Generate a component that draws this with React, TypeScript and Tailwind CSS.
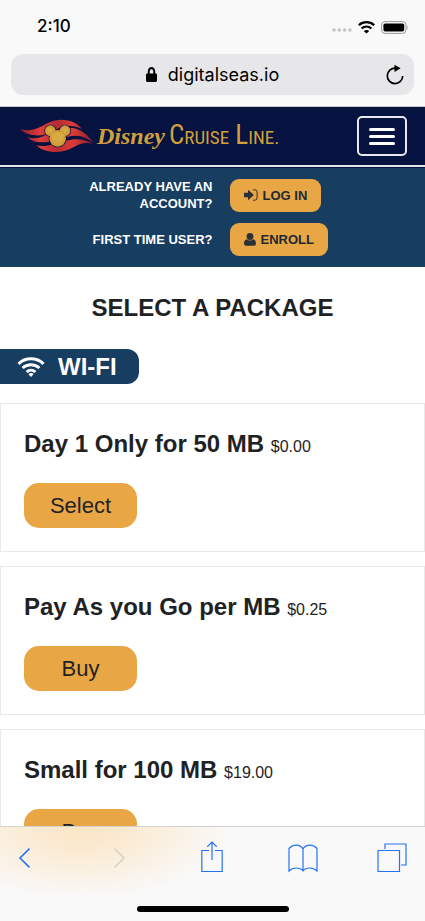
import React from "react";
import { FaLock } from "react-icons/fa";

const packages = [
  { name: "Day 1 Only for 50 MB", price: "$0.00", action: "Select" },
  { name: "Pay As you Go per MB", price: "$0.25", action: "Buy" },
  { name: "Small for 100 MB", price: "$19.00", action: "Buy" },
];

function WifiArcs({ className }: { className: string }) {
  return (
    <svg viewBox="0 0 28 20" className={className} fill="none" stroke="currentColor" strokeWidth="3" aria-hidden="true">
      <path d="M1.500 6.800C8.500 .2 19.500 .2 26.500 6.800" />
      <path d="M5.600 11c4.800-4.400 12-4.400 16.800 0" />
      <path d="M9.600 15c2.600-2.300 6.200-2.300 8.800 0" />
      <path d="M11.300 17q2.700-1.800 5.400 0L14 20z" fill="currentColor" stroke="none" />
    </svg>
  );
}

function StatusBar() {
  return (
    <div className="flex h-[54px] items-center justify-between pr-4 pl-[37px]">
      <span className="font-['Inter'] text-[17px] font-medium">2:10</span>
      <div className="flex items-center gap-[6px]">
        <svg viewBox="0 0 20 12" className="h-3 w-5" fill="#c3c3c5" aria-hidden="true">
          <circle cx="2" cy="9" r="1.800" /><circle cx="7.300" cy="9" r="1.800" />
          <circle cx="12.600" cy="9" r="1.800" /><circle cx="17.900" cy="9" r="1.800" />
        </svg>
        <svg viewBox="0 0 17 13" className="h-[13px] w-[17px]" fill="none" stroke="#000" strokeWidth="2.200" aria-hidden="true">
          <path d="M.8 4.200c4.400-4 11-4 15.400 0M3.600 7.500c2.900-2.600 6.900-2.600 9.800 0" />
          <path d="M5.800 9.900q2.700-2 5.400 0L8.500 12.500z" fill="#000" stroke="none" />
        </svg>
        <svg viewBox="0 0 28 13" className="h-[13px] w-7" aria-hidden="true">
          <rect x=".600" y=".600" width="24.400" height="11.800" rx="3.400" fill="none" stroke="#999" />
          <rect x="2.400" y="2.400" width="20.800" height="8.200" rx="1.800" />
          <path d="M26.200 4.600q1.600 1.900 0 3.800z" fill="#999" />
        </svg>
      </div>
    </div>
  );
}

function AddressBar() {
  return (
    <div className="relative mx-[11px] flex h-[41px] items-center justify-center gap-[11px] rounded-xl bg-[#e7e7e9]">
      <FaLock className="h-[15px] w-[11px]" preserveAspectRatio="none" aria-hidden="true" />
      <span className="font-['Inter'] text-[18px]">digitalseas.io</span>
      <button type="button" aria-label="Reload" className="absolute right-[9px]">
        <svg viewBox="0 0 20 22" className="h-[22px] w-5" fill="none" stroke="#000" strokeWidth="1.700" aria-hidden="true">
          <path d="M10.500 4.200A7.700 7.700 0 1 0 17.700 12" />
          <path d="M9.500.8L15.600 4.300 9.500 7.900z" fill="#000" stroke="none" />
        </svg>
      </button>
    </div>
  );
}

function MickeyFlag() {
  return (
    <svg viewBox="28 12 222 102" className="h-[34px] w-[74px] shrink-0" aria-hidden="true">
      <defs>
        <linearGradient id="flag" gradientUnits="userSpaceOnUse" x1="28" y1="0" x2="250" y2="0">
          <stop offset="0" stopColor="#8c1c2e" />
          <stop offset=".28" stopColor="#e03d3a" />
          <stop offset=".5" stopColor="#b52a34" />
          <stop offset=".72" stopColor="#dd3c38" />
          <stop offset="1" stopColor="#7d1a30" />
        </linearGradient>
        <radialGradient id="gold">
          <stop offset="0" stopColor="#ddb144" />
          <stop offset="1" stopColor="#cb9636" />
        </radialGradient>
      </defs>
      <g fill="url(#flag)">
        <path d="M28 42C84 58 102 14 150 14 182 14 202 26 214 42 186 26 152 32 124 50 92 68 50 64 28 42z" />
        <path d="M50 67C100 80 118 40 170 38 210 36 232 60 250 86 228 66 202 56 170 66 140 76 80 96 50 67z" />
        <path d="M76 91C110 98 130 86 164 78 196 68 222 72 246 86 208 78 196 96 168 106 134 116 100 112 76 91z" />
      </g>
      <g fill="#06123f">
        <circle cx="119" cy="47" r="18" />
        <circle cx="163" cy="47" r="18" />
        <circle cx="141" cy="70" r="27" />
      </g>
      <g fill="url(#gold)">
        <circle cx="119" cy="47" r="16" />
        <circle cx="163" cy="47" r="16" />
        <circle cx="141" cy="70" r="25" />
      </g>
      <path d="M122 58Q141 44 160 58L156 76H126z" fill="#d8ab41" />
    </svg>
  );
}

function Navbar() {
  return (
    <div className="border-b border-[#06123f]">
      <nav className="flex h-[60px] items-center justify-between border-b-2 border-[#dfe2ea] bg-[#06123f] pr-[18px] pl-5">
        <a href="#home" className="flex items-center text-[#d2a03a]">
          <MickeyFlag />
          <span className="ml-[3px] font-['Liberation_Serif',serif] text-[24px] leading-8 font-bold italic">Disney</span>
          <span className="ml-1 font-['Roboto_Condensed','DejaVu_Sans_Condensed',sans-serif] text-[27px] leading-8 whitespace-nowrap">
            C<span className="text-[19px]">RUISE</span> L<span className="text-[19px]">INE.</span>
          </span>
        </a>
        <button type="button" aria-label="Menu" className="flex h-10 w-[50px] flex-col items-center justify-center gap-1 rounded-[5px] border-2 border-[#e6e8ee]">
          <span className="h-[3px] w-[26px] rounded-full bg-white" />
          <span className="h-[3px] w-[26px] rounded-full bg-white" />
          <span className="h-[3px] w-[26px] rounded-full bg-white" />
        </button>
      </nav>
    </div>
  );
}

function AccountPanel() {
  const button = "flex h-[33px] items-center gap-[5px] justify-self-start rounded-[9px] bg-[#e8a645] px-[14px] text-[#1f2933]";
  return (
    <section className="grid grid-cols-2 items-center gap-x-[17px] gap-y-[11px] bg-[#173d61] pt-[10px] pb-[11px] pl-[17px] text-[13px] leading-[17px] font-bold">
      <p className="justify-self-end pl-[60px] text-right text-white">ALREADY HAVE AN ACCOUNT?</p>
      <button type="button" className={button}>
        <svg viewBox="0 0 14 12" className="h-3 w-[14px]" fill="#2b3036" aria-hidden="true">
          <path d="M0 3.800h4V.8L10 6l-6 5.200V8.200H0z" />
          <path d="M9 .8h1.800A2.300 2.300 0 0 1 13.100 3v6a2.300 2.300 0 0 1-2.300 2.200H9" fill="none" stroke="#2b3036" strokeWidth="1" />
        </svg>
        LOG IN
      </button>
      <p className="justify-self-end text-right text-white">FIRST TIME USER?</p>
      <button type="button" className={button}>
        <svg viewBox="0 0 12 13" className="h-[13px] w-3" fill="#2b3036" aria-hidden="true">
          <circle cx="6" cy="3.500" r="3.400" />
          <path d="M2.800 6.200Q6 9 9.200 6.200 12 7 12 10.500 12 12.700 10 12.700H2Q0 12.700 0 10.500 0 7 2.800 6.200z" />
        </svg>
        ENROLL
      </button>
    </section>
  );
}

function PackageCard({ name, price, action }: { name: string; price: string; action: string }) {
  return (
    <article className="h-[149px] shrink-0 border border-[#e9e9e9] px-[23px] pt-[25px]">
      <h3 className="text-2xl leading-[30px] font-bold">
        {name} <small className="text-base font-normal">{price}</small>
      </h3>
      <button type="button" className="mt-6 h-[45px] w-[113px] rounded-[15px] bg-[#e8a645] text-[22px]">
        {action}
      </button>
    </article>
  );
}

function BrowserToolbar() {
  return (
    <footer className="shrink-0 border-t border-[#d2d2d2] bg-[#f9f9f9] bg-[radial-gradient(ellipse_150px_72px_at_82px_0px,#fbe5c5_0%,#fbecd6_40%,#f9f9f9_100%)] pb-[9px] text-[#2672f6]">
      <div className="flex h-[71px] items-start justify-between px-[18px] pt-[14px]">
        <button type="button" aria-label="Back">
          <svg viewBox="0 0 12 32" className="h-8 w-3" fill="none" stroke="currentColor" strokeWidth="1.600"><path d="M11.500 7.500L2 17l9.500 9.500" /></svg>
        </button>
        <button type="button" aria-label="Forward" className="ml-[25px] text-[#d8d3c9]">
          <svg viewBox="0 0 12 32" className="h-8 w-3" fill="none" stroke="currentColor" strokeWidth="1.600"><path d="M.500 7.500L10 17 .500 26.500" /></svg>
        </button>
        <button type="button" aria-label="Share" className="ml-4">
          <svg viewBox="0 0 22 32" className="h-8 w-[22px]" fill="none" stroke="currentColor" strokeWidth="1.200"><path d="M8 9.500H.800V30.500H21.200V9.500H14M11 19V1M6.200 5.800L11 1l4.800 4.800" /></svg>
        </button>
        <button type="button" aria-label="Bookmarks" className="ml-[6px]">
          <svg viewBox="0 0 30 32" className="h-8 w-[30px]" fill="none" stroke="currentColor" strokeWidth="1.200"><path d="M15 8v22M15 8C12 3 5 3 1 7.500V30c4-4 11-4 14 0 3-4 10-4 14 0V7.500C25 3 18 3 15 8z" /></svg>
        </button>
        <button type="button" aria-label="Tabs">
          <svg viewBox="0 0 30 32" className="h-8 w-[30px]" fill="none" stroke="currentColor" strokeWidth="1.200"><path d="M1 9.500H22.500V30.500H1zM8 8V3H29V24H24" /></svg>
        </button>
      </div>
      <div className="mx-auto mt-2 h-[6px] w-[152px] rounded-full bg-black" />
    </footer>
  );
}

export default function App() {
  return (
    <div className="flex h-dvh flex-col overflow-hidden bg-white font-['Liberation_Sans',Arial,sans-serif] text-[#1f2225]">
      <header className="shrink-0 border-b border-[#c9c9cc] bg-[#f9f9f9] pb-[11px] text-black">
        <StatusBar />
        <AddressBar />
      </header>
      <main className="flex min-h-0 flex-1 flex-col overflow-hidden">
        <Navbar />
        <AccountPanel />
        <h1 className="mt-[25px] text-center text-2xl leading-8 font-bold">SELECT A PACKAGE</h1>
        <h2 className="mt-[25px] flex h-[35px] w-[139px] shrink-0 items-center gap-[13px] rounded-r-xl bg-[#173d61] pl-[17px] text-2xl font-bold text-white">
          <WifiArcs className="h-5 w-7" />
          WI-FI
        </h2>
        <div className="mt-[19px] flex flex-col gap-[14px]">
          {packages.map((item) => (
            <PackageCard key={item.name} {...item} />
          ))}
        </div>
      </main>
      <BrowserToolbar />
    </div>
  );
}
